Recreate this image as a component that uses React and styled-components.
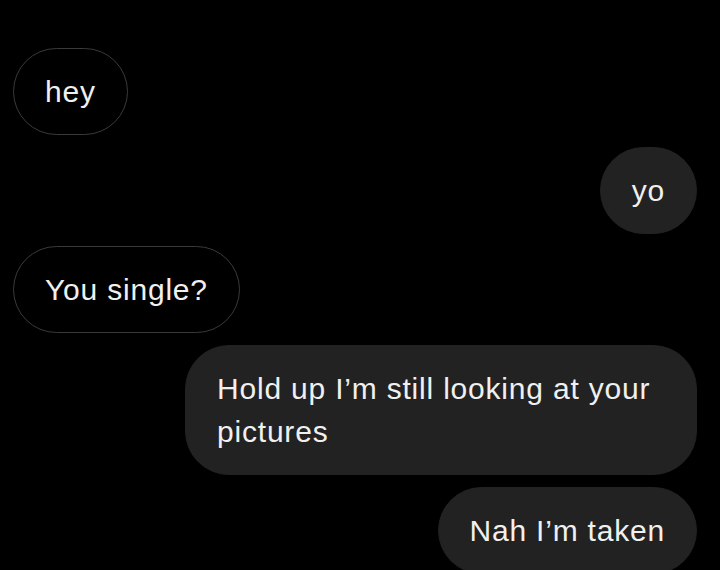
import React from "react";
import styled, { createGlobalStyle } from "styled-components";

const Global = createGlobalStyle`
  html, body { margin: 0; padding: 0; background: #000; }
  body { font-family: "Liberation Sans", Arial, sans-serif; }
`;

const Thread = styled.div`
  width: 720px;
  height: 570px;
  overflow: hidden;
  box-sizing: border-box;
  padding: 48px 23px 0 13px;
  display: flex;
  flex-direction: column;
  gap: 12px;
  background: #000;
`;

const Bubble = styled.div`
  align-self: ${(p) => (p.$mine ? "flex-end" : "flex-start")};
  box-sizing: border-box;
  ${(p) => (p.$wide ? "width: 512px;" : "")}
  padding: 21px 31px 21px 31px;
  border-radius: 44px;
  font-size: 30px;
  letter-spacing: 0.8px;
  line-height: 43px;
  color: #f0f0f0;
  background: ${(p) => (p.$mine ? "#222222" : "#000")};
  border: ${(p) => (p.$mine ? "1px solid #222222" : "1.5px solid #3a3a3a")};
`;

const messages = [
  { text: "hey", mine: false },
  { text: "yo", mine: true },
  { text: "You single?", mine: false },
  { text: "Hold up I’m still looking at your pictures", mine: true, wide: true },
  { text: "Nah I’m taken", mine: true },
];

export default function App() {
  return (
    <>
      <Global />
      <Thread>
        {messages.map((m, i) => (
          <Bubble key={i} $mine={m.mine} $wide={m.wide}>
            {m.text}
          </Bubble>
        ))}
      </Thread>
    </>
  );
}
